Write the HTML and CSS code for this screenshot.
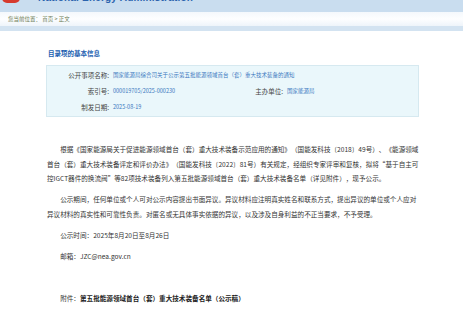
FILE: index.html
```html
<!DOCTYPE html>
<html lang="zh-CN">
<head>
<meta charset="utf-8">
<title>第五批能源领域首台（套）重大技术装备公示</title>
<link rel="stylesheet" href="styles.css">
</head>
<body>
<header class="top">
  <div class="brand">
    <span class="logo"></span>
    <span class="en">National Energy Administration</span>
  </div>
</header>
<nav class="crumb">您当前位置： 首页 &gt; 正文</nav>
<div class="crumb-rule"></div>
<main class="content">
  <h2 class="sec-title">目录项的基本信息</h2>
  <div class="info">
    <div class="label">公开事项名称:</div>
    <div class="value wide">国家能源局综合司关于公示第五批能源领域首台（套）重大技术装备的通知</div>
    <div class="label">索引号:</div>
    <div class="value">000019705/2025-000230</div>
    <div class="label">主办单位:</div>
    <div class="value">国家能源局</div>
    <div class="label">制发日期:</div>
    <div class="value wide">2025-08-19</div>
  </div>
  <article class="article">
    <p>根据《国家能源局关于促进能源领域首台（套）重大技术装备示范应用的通知》（国能发科技〔2018〕49号）、《能源领域首台（套）重大技术装备评定和评价办法》（国能发科技〔2022〕81号）有关规定，经组织专家评审和复核，拟将“基于自主可控IGCT器件的换流阀”等82项技术装备列入第五批能源领域首台（套）重大技术装备名单（详见附件），现予公示。</p>
    <p>公示期间，任何单位或个人可对公示内容提出书面异议。异议材料应注明真实姓名和联系方式，提出异议的单位或个人应对异议材料的真实性和可靠性负责。对匿名或无具体事实依据的异议，以及涉及自身利益的不正当要求，不予受理。</p>
    <p>公示时间：2025年8月20日至8月26日</p>
    <p>邮箱：JZC@nea.gov.cn</p>
    <p class="attach">附件：<a class="attach-link">第五批能源领域首台（套）重大技术装备名单（公示稿）</a></p>
  </article>
</main>
</body>
</html>
```
FILE: styles.css
```css
html, body {
  margin: 0;
  padding: 0;
  background: #ffffff;
}
body {
  width: 463px;
  font-family: "Noto Sans CJK SC", "Noto Sans", sans-serif;
  color: #333333;
  overflow: hidden;
}
.top {
  height: 12px;
  background: #c9ddef;
  overflow: hidden;
}
.brand {
  display: flex;
  align-items: flex-start;
  margin-top: -9px;
  padding-left: 2px;
}
.logo {
  display: block;
  width: 18px;
  height: 12px;
  background: #d63a2d;
  border-radius: 0 0 5px 5px;
}
.en {
  display: block;
  margin-left: 18px;
  font-family: "Liberation Sans", Arial, sans-serif;
  font-weight: bold;
  font-size: 10px;
  line-height: 14px;
  letter-spacing: 0.2px;
  color: #2b63ad;
}
.crumb {
  height: 14px;
  line-height: 14px;
  padding-left: 8px;
  font-size: 5.5px;
  color: #6f7f58;
  background: linear-gradient(#f4f8fc, #fdfeff 50%, #eef4fa);
}
.crumb-rule {
  height: 5px;
  background: #d3e3f1;
}
.content {
  padding-left: 46px;
  width: 377px;
}
.sec-title {
  margin: 17px 0 7px 2px;
  font-size: 6.5px;
  line-height: 10px;
  font-weight: bold;
  color: #2160b0;
}
.info {
  display: grid;
  grid-template-columns: 62px 132px 36px 1fr;
  grid-auto-rows: 16px;
  align-items: center;
  column-gap: 3px;
  width: 371px;
  padding: 1px 0 0;
  height: 49px;
  box-sizing: content-box;
  background: #eaf7fb;
  border: 1px solid #d6e9f0;
}
.label {
  text-align: right;
  font-size: 6.5px;
  color: #444444;
  white-space: nowrap;
}
.value {
  font-size: 5.5px;
  color: #3b77c0;
  white-space: nowrap;
  padding-left: 1px;
}
.value.wide {
  grid-column: 2 / 5;
}
.article {
  padding-top: 25px;
  padding-left: 1px;
  width: 375px;
}
.article p {
  margin: 0 0 6.5px;
  font-size: 6.6px;
  line-height: 14.5px;
  text-indent: 2em;
  color: #333333;
  text-spacing-trim: space-all;
}
.article p.attach {
  margin-top: 28px;
}
.attach-link {
  font-weight: bold;
  color: #222222;
}
```
